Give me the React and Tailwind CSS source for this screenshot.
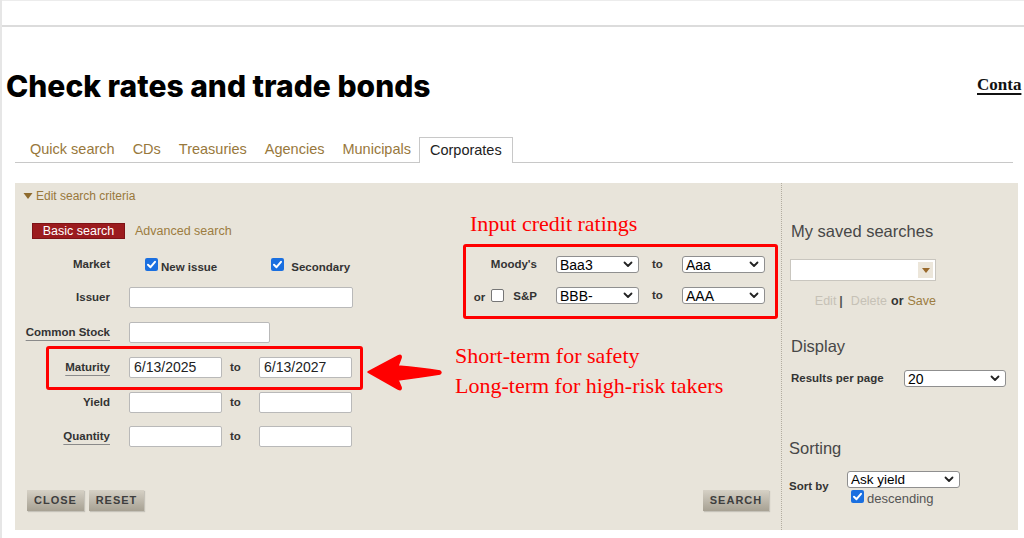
import React from "react"

const sans = "font-['Liberation_Sans',Arial,sans-serif]"

function Chevron() {
  return (
    <svg width="10" height="7" viewBox="0 0 10 7" className="shrink-0">
      <path d="M1.5 1.5 L5 5 L8.5 1.5" fill="none" stroke="#222" strokeWidth="1.8" strokeLinecap="round" strokeLinejoin="round" />
    </svg>
  )
}

function FakeSelect({ value, w, text = "text-[14px]" }) {
  return (
    <div
      className={`flex h-[17px] items-center justify-between rounded-[3px] border border-[#8f8f8f] bg-white pl-[3px] pr-[5px] ${text} font-normal leading-none text-black`}
      style={{ width: w }}
    >
      <span>{value}</span>
      <Chevron />
    </div>
  )
}

function Check({ checked }) {
  if (!checked)
    return <span className="inline-block h-[13px] w-[13px] shrink-0 rounded-[2px] border border-[#767676] bg-white" />
  return (
    <span className="flex h-[13px] w-[13px] shrink-0 items-center justify-center rounded-[2px] bg-[#1a6fe0]">
      <svg width="11" height="11" viewBox="0 0 11 11">
        <path d="M2 5.8 L4.5 8.2 L9 2.8" fill="none" stroke="white" strokeWidth="2" strokeLinecap="round" strokeLinejoin="round" />
      </svg>
    </span>
  )
}

function Label({ children, under }) {
  return (
    <div className="w-[95px] shrink-0 text-right text-[11.5px] font-bold text-[#333]">
      <span className={under ? "underline decoration-[#8a8a8a] underline-offset-[4px]" : ""}>{children}</span>
    </div>
  )
}

function Field({ w, value = "" }) {
  return (
    <input
      readOnly
      defaultValue={value}
      className="h-[21px] rounded-[2px] border border-[#b9b9b9] bg-white px-[4px] text-[14px] text-[#222] outline-none"
      style={{ width: w }}
    />
  )
}

function RangeRow({ label, under, from, to, className = "", children }) {
  return (
    <div className={`relative flex h-[21px] items-center ${className}`}>
      <Label under={under}>{label}</Label>
      <div className="ml-[19px]">
        <Field w={93} value={from} />
      </div>
      <div className="w-[37px] pl-[8px] text-[11.5px] font-bold text-[#333]">to</div>
      <Field w={93} value={to} />
      {children}
    </div>
  )
}

function Btn({ children, w }) {
  return (
    <div
      className="flex h-[21px] items-center justify-center bg-gradient-to-b from-[#d6d1c6] to-[#a7a193] text-[11px] font-bold tracking-[1px] text-[#3e3e3e] shadow-[1px_1px_1px_rgba(0,0,0,0.15)]"
      style={{ width: w }}
    >
      {children}
    </div>
  )
}

const tabs = ["Quick search", "CDs", "Treasuries", "Agencies", "Municipals"]

export default function App() {
  return (
    <div className={`h-[538px] w-[1024px] overflow-hidden border-l-2 border-[#e6e6e6] bg-white ${sans}`}>
      <div className="h-[27px] border-t border-b-2 border-t-[#ececec] border-b-[#dcdcdc]" />

      <div className="mt-[41px] flex h-[36px] items-start">
        <h1 className="w-[975px] shrink-0 pl-[4px] font-['Inter',sans-serif] text-[30px] font-extrabold leading-[36px] tracking-[0px] text-black">
          Check rates and trade bonds
        </h1>
        <a className="mt-[4px] whitespace-nowrap font-['Liberation_Serif',serif] text-[17px] font-bold text-[#111] underline decoration-2 underline-offset-[3px]">
          Conta
        </a>
      </div>

      <div className="ml-[13px] mr-[11px] mt-[33px] flex h-[26px] border-b border-[#c8c8c8] pl-[6px] text-[14.5px]">
        {tabs.map((t) => (
          <div key={t} className="flex h-[25px] items-center px-[9px] text-[#98783c]">
            {t}
          </div>
        ))}
        <div className="-mb-px -ml-px flex h-[26px] items-center border border-b-0 border-[#c8c8c8] bg-white px-[10px] text-[#222]">
          Corporates
        </div>
      </div>

      <div className="ml-[13px] mt-[20px] flex h-[347px] w-[1003px] bg-[#e8e4da]">
        {/* left search area */}
        <div className="relative w-[766px] shrink-0">
          <div className="flex h-[25px] items-center pl-[8px] text-[12px] text-[#98783c]">
            <svg width="10" height="8" viewBox="0 0 10 8" className="mr-[3px]">
              <path d="M0.5 1 L9.5 1 L5 7 Z" fill="#8e6a2e" />
            </svg>
            Edit search criteria
          </div>

          <div className="flex">
            <div className="w-[440px] shrink-0">
              <div className="ml-[17px] mt-[14px] flex items-center">
                <div className="flex h-[16px] w-[93px] items-center justify-center border border-[#7d1216] bg-[#9b1b1e] text-[12.5px] text-white">
                  Basic search
                </div>
                <span className="ml-[10px] text-[12.5px] text-[#9c7c40]">Advanced search</span>
              </div>

              <div className="mt-[14px] flex h-[20px] items-center">
                <Label>Market</Label>
                <div className="ml-[35px] flex items-center">
                  <Check checked />
                  <span className="ml-[3px] mt-[5px] text-[11.5px] font-bold text-[#333]">New issue</span>
                </div>
                <div className="ml-[54px] flex items-center">
                  <Check checked />
                  <span className="ml-[7px] mt-[5px] text-[11.5px] font-bold text-[#333]">Secondary</span>
                </div>
              </div>

              <div className="mt-[12px] flex h-[21px] items-center">
                <Label>Issuer</Label>
                <div className="ml-[19px]">
                  <Field w={224} />
                </div>
              </div>

              <div className="mt-[14px] flex h-[21px] items-center">
                <Label under>Common Stock</Label>
                <div className="ml-[19px]">
                  <Field w={141} />
                </div>
              </div>

              <RangeRow label="Maturity" under from="6/13/2025" to="6/13/2027" className="mt-[14px]">
                <div className="pointer-events-none absolute left-[31px] top-[-11px] h-[44px] w-[317px] rounded-[3px] border-[3px] border-[#f00]" />
              </RangeRow>
              <RangeRow label="Yield" className="mt-[14px]" />
              <RangeRow label="Quantity" under className="mt-[13px]" />
            </div>

            {/* annotation column */}
            <div className="pt-[1px] font-['Liberation_Serif',serif] text-[22px] leading-[30px] text-[#f00]">
              <div className="pl-[15px]">Input credit ratings</div>
              <div className="ml-[8px] mt-[5px] h-[75px] w-[315px] rounded-[3px] border-[3px] border-[#f00] pt-[9px] font-['Liberation_Sans',sans-serif] text-[11.5px] font-bold leading-none text-[#333]">
                <div className="flex h-[17px] items-center">
                  <div className="w-[71px] text-right">Moody's</div>
                  <div className="ml-[19px]">
                    <FakeSelect value="Baa3" w={83} />
                  </div>
                  <div className="w-[43px] pl-[13px]">to</div>
                  <FakeSelect value="Aaa" w={83} />
                </div>
                <div className="mt-[14px] flex h-[17px] items-center">
                  <div className="flex w-[71px] items-center justify-end">
                    <span className="mr-[6px] mt-[4px]">or</span>
                    <Check />
                    <span className="ml-[9px] mt-[3px]">S&amp;P</span>
                  </div>
                  <div className="ml-[19px]">
                    <FakeSelect value="BBB-" w={83} />
                  </div>
                  <div className="w-[43px] pl-[13px]">to</div>
                  <FakeSelect value="AAA" w={83} />
                </div>
              </div>
              <div className="mt-[22px]">Short-term for safety</div>
              <div>Long-term for high-risk takers</div>
            </div>
          </div>

          <div className="mt-[43px] flex justify-between px-[12px]">
            <div className="flex gap-[5px]">
              <Btn w={57}>CLOSE</Btn>
              <Btn w={55}>RESET</Btn>
            </div>
            <Btn w={66}>SEARCH</Btn>
          </div>

          <svg width="76" height="38" viewBox="0 0 76 38" className="absolute left-[352px] top-[171px]">
            <path
              d="M1 18 L31 2 Q35 0 34 4 L31 12 Q54 14 73 17 Q75 18.5 73 20 Q54 23 31 26 L34 33 Q35 37 31 35 Z"
              fill="#f00"
              stroke="#f00"
              strokeWidth="1.5"
              strokeLinejoin="round"
            />
          </svg>
        </div>

        {/* right column */}
        <div className="flex-1 border-l border-dotted border-[#b3ada0] pl-[9px] pt-[38px]">
          <div className="h-[20px] text-[16.5px] leading-[20px] text-[#474747]">My saved searches</div>
          <div className="-ml-px mt-[18px] flex h-[22px] w-[146px] items-stretch justify-end border border-[#c9c6bf] bg-white p-[2px]">
            <div className="flex w-[15px] items-center justify-center bg-[#ece6da]">
              <svg width="8" height="5" viewBox="0 0 8 5">
                <path d="M0 0 L8 0 L4 5 Z" fill="#9a6a2c" />
              </svg>
            </div>
          </div>
          <div className="mt-[12px] flex h-[16px] w-[145px] items-center justify-end text-[12.5px]">
            <span className="text-[#c6c1b6]">Edit</span>
            <span className="ml-[3px] font-bold text-[#555]">|</span>
            <span className="ml-[8px] text-[#c6c1b6]">Delete</span>
            <span className="ml-[4px] font-bold text-[#333]">or</span>
            <span className="ml-[4px] text-[#9c7c40]">Save</span>
          </div>

          <div className="mt-[27px] h-[20px] text-[16.5px] leading-[20px] text-[#474747]">Display</div>
          <div className="mt-[14px] flex h-[17px] items-center">
            <div className="w-[113px] text-[11.5px] font-bold text-[#333]">Results per page</div>
            <FakeSelect value="20" w={102} />
          </div>

          <div className="-ml-[2px] mt-[51px] h-[20px] text-[16.5px] leading-[20px] text-[#474747]">Sorting</div>
          <div className="-ml-[2px] mt-[13px] flex items-center">
            <div className="w-[58px] text-[11.5px] font-bold text-[#333]">Sort by</div>
            <div>
              <FakeSelect value="Ask yield" w={113} text="text-[13.5px]" />
              <div className="ml-[4px] mt-[2px] flex h-[13px] items-center">
                <Check checked />
                <span className="ml-[3px] mt-[4px] text-[13px] text-[#555]">descending</span>
              </div>
            </div>
          </div>
        </div>
      </div>
    </div>
  )
}
